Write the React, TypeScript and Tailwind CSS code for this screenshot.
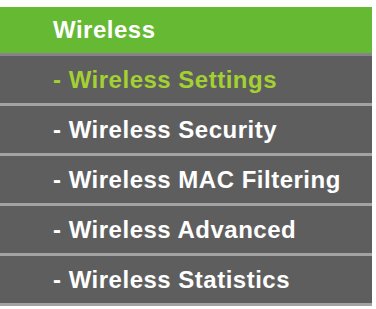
const items = [
  "- Wireless Settings",
  "- Wireless Security",
  "- Wireless MAC Filtering",
  "- Wireless Advanced",
  "- Wireless Statistics",
];

export default function App() {
  return (
    <div className="h-[309px] w-[376px] overflow-hidden bg-white pt-[7px] font-[family-name:'Liberation_Sans',Arial,sans-serif]">
      <div className="w-[372px] bg-[#5e5e5e]">
        <div className="flex h-[46px] items-center bg-[#66b933] pl-[53px] text-[24px] font-bold tracking-[0.5px] text-white">
          Wireless
        </div>
        <div className="h-[3px] bg-[#86838c]" />
        {items.map((label, i) => (
          <div key={label}>
            <div
              className={
                "flex h-[47px] items-center pl-[53px] text-[24px] font-bold tracking-[0.5px] " +
                (i === 0 ? "text-[#a3d132]" : "text-white")
              }
            >
              {label}
            </div>
            <div className="h-[3px] bg-[#a3a3a3]" />
          </div>
        ))}
      </div>
    </div>
  );
}
